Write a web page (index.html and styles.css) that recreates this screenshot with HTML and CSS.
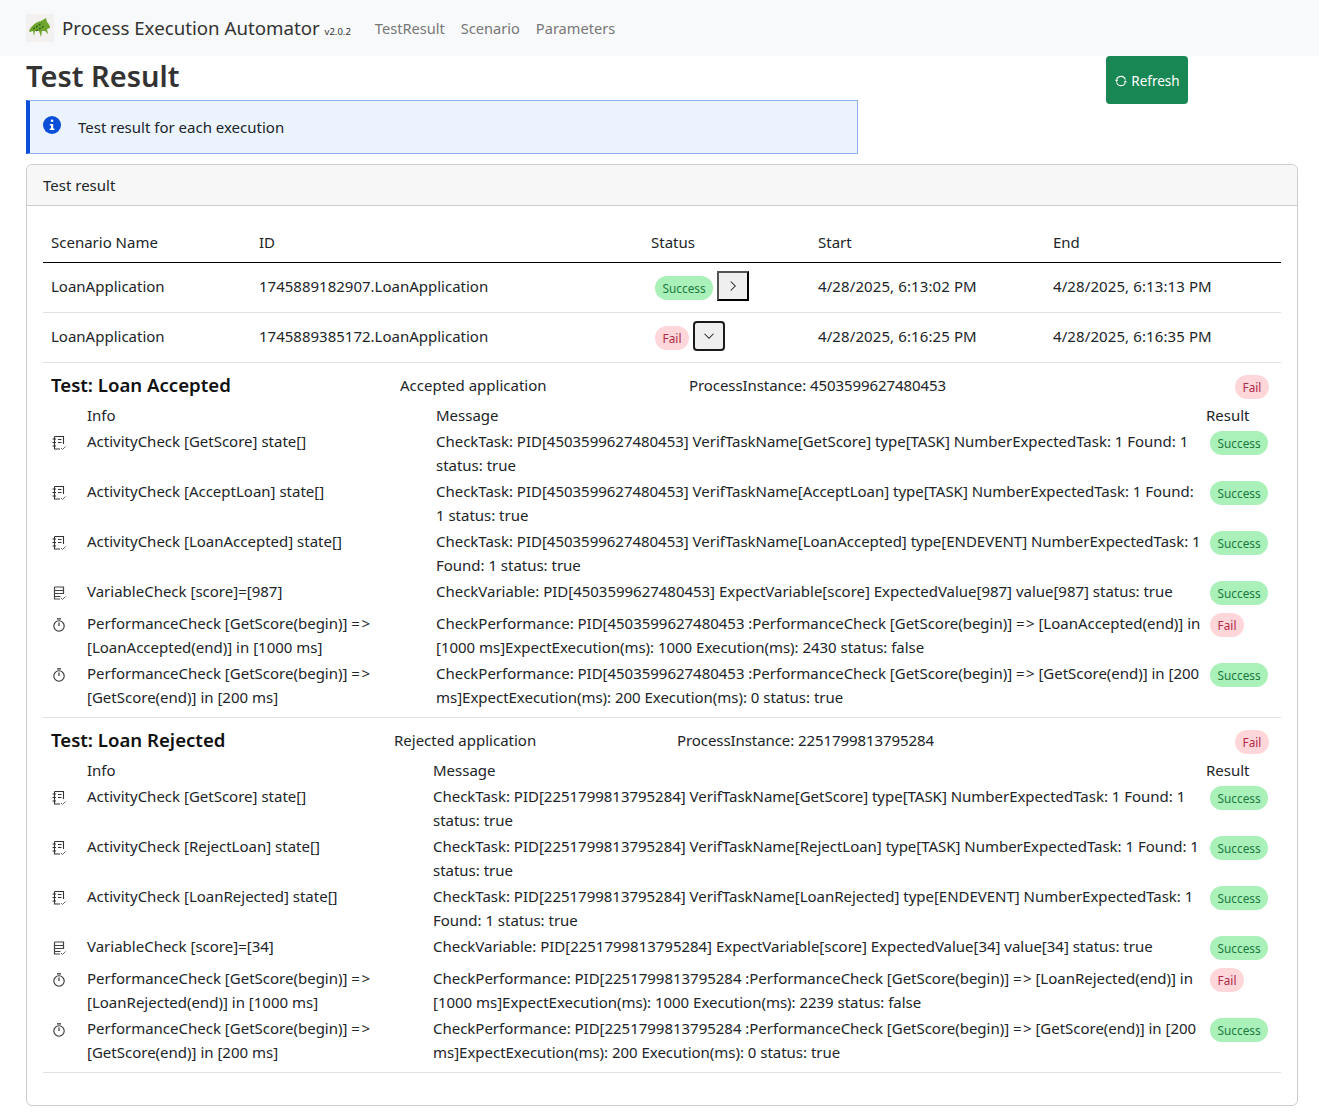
FILE: index.html
```html
<!DOCTYPE html>
<html>
  <head>
    <meta charset="UTF-8" />
    <title>Process Execution Automator</title>
    <link rel="stylesheet" href="styles.css">
  </head>
  <body>
    <svg class="icon-defs" width="0" height="0">
      <symbol id="icon-task" viewBox="0 0 16 16">
        <path d="M3.5 1.5h9v7.5M9 14H3.5V1.5" fill="none" stroke="#333" stroke-width="1.1"/>
        <path d="M1.5 4h3.5M1.5 7.5h3.5M1.5 11h3.5M7 4.5h3.5M7 7.5h3.5" fill="none" stroke="#333" stroke-width="1"/>
        <path d="M10 13l1.5 1.5 3-3" fill="none" stroke="#666" stroke-width="1"/>
      </symbol>
      <symbol id="icon-variable" viewBox="0 0 16 16">
        <path d="M3.5 2h9v7M9 14H3.5V2M3.5 5.5h9M3.5 8.5h9M3.5 11.5h6" fill="none" stroke="#444" stroke-width="1.2"/>
        <path d="M10 13l1.5 1.5 3-3" fill="none" stroke="#666" stroke-width="1"/>
      </symbol>
      <symbol id="icon-timer" viewBox="0 0 16 16">
        <circle cx="8" cy="9" r="5.2" fill="none" stroke="#333" stroke-width="1.1"/>
        <path d="M6 1.8h4M8 5.5V9" fill="none" stroke="#333" stroke-width="1.2"/>
      </symbol>
    </svg>

    <nav class="navbar">
      <svg class="logo" width="28" height="28" viewBox="0 0 28 28">
        <rect width="28" height="28" fill="#f2f1ef"/>
        <path d="M3 17c2-5 7-9 12-10l5-3 1 4c2 2 3 4 3 6l-3 1 1 5-3-3-3 0-1 6-2-6-4 0-1 5-1-5-3 1z" fill="#6fa52f"/>
        <path d="M7 15l9-6M10 17l8-5" stroke="#31611a" stroke-width="1.4" stroke-dasharray="2 1.5"/>
      </svg>
      <a class="brand" href="#">Process Execution Automator <small>v2.0.2</small></a>
      <a class="nav-link" href="#">TestResult</a>
      <a class="nav-link" href="#">Scenario</a>
      <a class="nav-link" href="#">Parameters</a>
    </nav>

    <main class="page">
      <div class="page-top">
        <div class="page-intro">
          <h1>Test Result</h1>
          <div class="alert">
            <svg class="alert-icon" width="18" height="18" viewBox="0 0 18 18">
              <circle cx="9" cy="9" r="9" fill="#0b4fd8"/>
              <rect x="7.8" y="3.5" width="2.6" height="2.6" rx="1.3" fill="#fff"/>
              <path d="M6.8 8h3.4v4.6h1.2v1.4H6.8v-1.4H8V9.4H6.8z" fill="#fff"/>
            </svg>
            <span>Test result for each execution</span>
          </div>
        </div>
        <button class="refresh" type="button">
          <svg width="14" height="14" viewBox="0 0 16 16">
            <path d="M3 6.5A5.2 5.2 0 0 1 13 6.5M13 9.5A5.2 5.2 0 0 1 3 9.5" fill="none" stroke="#fff" stroke-width="1.2"/>
            <path d="M1 6.5h4L3 9zM15 9.5h-4L13 7z" fill="#fff"/>
          </svg>
          Refresh
        </button>
      </div>

      <section class="card">
        <div class="card-header">Test result</div>
        <div class="card-body">
          <div class="exec-row exec-head">
            <div>Scenario Name</div>
            <div>ID</div>
            <div>Status</div>
            <div>Start</div>
            <div>End</div>
          </div>
          <div class="exec-row">
            <div>LoanApplication</div>
            <div>1745889182907.LoanApplication</div>
            <div class="status-cell">
              <span class="badge success">Success</span>
              <button class="toggle" type="button">
                <svg width="12" height="12" viewBox="0 0 16 16"><path d="M5 2l6 6-6 6" fill="none" stroke="#222" stroke-width="1.4"/></svg>
              </button>
            </div>
            <div class="date">4/28/2025, 6:13:02 PM</div>
            <div class="date">4/28/2025, 6:13:13 PM</div>
          </div>
          <div class="exec-row">
            <div>LoanApplication</div>
            <div>1745889385172.LoanApplication</div>
            <div class="status-cell">
              <span class="badge fail">Fail</span>
              <button class="toggle open" type="button">
                <svg width="12" height="12" viewBox="0 0 16 16"><path d="M2 5l6 6 6-6" fill="none" stroke="#222" stroke-width="1.4"/></svg>
              </button>
            </div>
            <div class="date">4/28/2025, 6:16:25 PM</div>
            <div class="date">4/28/2025, 6:16:35 PM</div>
          </div>

          <div class="test test-accepted">
            <div class="test-title">
              <h2>Test: Loan Accepted</h2>
              <div>Accepted application</div>
              <div class="instance">ProcessInstance: 4503599627480453</div>
              <span class="badge fail">Fail</span>
            </div>
            <div class="check check-head"><div></div><div>Info</div><div>Message</div><div>Result</div></div>
            <div class="check">
              <svg class="check-icon" width="16" height="16"><use href="#icon-task"/></svg>
              <div>ActivityCheck [GetScore] state[]</div>
              <div class="message">CheckTask: PID[4503599627480453] VerifTaskName[GetScore] type[TASK] NumberExpectedTask: 1 Found: 1 status: true</div>
              <div><span class="badge success">Success</span></div>
            </div>
            <div class="check">
              <svg class="check-icon" width="16" height="16"><use href="#icon-task"/></svg>
              <div>ActivityCheck [AcceptLoan] state[]</div>
              <div class="message">CheckTask: PID[4503599627480453] VerifTaskName[AcceptLoan] type[TASK] NumberExpectedTask: 1 Found: 1 status: true</div>
              <div><span class="badge success">Success</span></div>
            </div>
            <div class="check">
              <svg class="check-icon" width="16" height="16"><use href="#icon-task"/></svg>
              <div>ActivityCheck [LoanAccepted] state[]</div>
              <div class="message">CheckTask: PID[4503599627480453] VerifTaskName[LoanAccepted] type[ENDEVENT] NumberExpectedTask: 1 Found: 1 status: true</div>
              <div><span class="badge success">Success</span></div>
            </div>
            <div class="check check-single">
              <svg class="check-icon" width="16" height="16"><use href="#icon-variable"/></svg>
              <div>VariableCheck [score]=[987]</div>
              <div class="message">CheckVariable: PID[4503599627480453] ExpectVariable[score] ExpectedValue[987] value[987] status: true</div>
              <div><span class="badge success">Success</span></div>
            </div>
            <div class="check">
              <svg class="check-icon" width="16" height="16"><use href="#icon-timer"/></svg>
              <div>PerformanceCheck [GetScore(begin)] =&hairsp;&gt; [LoanAccepted(end)] in [1000 ms]</div>
              <div class="message">CheckPerformance: PID[4503599627480453 :PerformanceCheck [GetScore(begin)] =&hairsp;&gt; [LoanAccepted(end)] in [1000 ms]ExpectExecution(ms): 1000 Execution(ms): 2430 status: false</div>
              <div><span class="badge fail">Fail</span></div>
            </div>
            <div class="check">
              <svg class="check-icon" width="16" height="16"><use href="#icon-timer"/></svg>
              <div>PerformanceCheck [GetScore(begin)] =&hairsp;&gt; [GetScore(end)] in [200 ms]</div>
              <div class="message">CheckPerformance: PID[4503599627480453 :PerformanceCheck [GetScore(begin)] =&hairsp;&gt; [GetScore(end)] in [200 ms]ExpectExecution(ms): 200 Execution(ms): 0 status: true</div>
              <div><span class="badge success">Success</span></div>
            </div>
          </div>

          <div class="test test-rejected">
            <div class="test-title">
              <h2>Test: Loan Rejected</h2>
              <div>Rejected application</div>
              <div class="instance">ProcessInstance: 2251799813795284</div>
              <span class="badge fail">Fail</span>
            </div>
            <div class="check check-head"><div></div><div>Info</div><div>Message</div><div>Result</div></div>
            <div class="check">
              <svg class="check-icon" width="16" height="16"><use href="#icon-task"/></svg>
              <div>ActivityCheck [GetScore] state[]</div>
              <div class="message">CheckTask: PID[2251799813795284] VerifTaskName[GetScore] type[TASK] NumberExpectedTask: 1 Found: 1 status: true</div>
              <div><span class="badge success">Success</span></div>
            </div>
            <div class="check">
              <svg class="check-icon" width="16" height="16"><use href="#icon-task"/></svg>
              <div>ActivityCheck [RejectLoan] state[]</div>
              <div class="message">CheckTask: PID[2251799813795284] VerifTaskName[RejectLoan] type[TASK] NumberExpectedTask: 1 Found: 1 status: true</div>
              <div><span class="badge success">Success</span></div>
            </div>
            <div class="check">
              <svg class="check-icon" width="16" height="16"><use href="#icon-task"/></svg>
              <div>ActivityCheck [LoanRejected] state[]</div>
              <div class="message">CheckTask: PID[2251799813795284] VerifTaskName[LoanRejected] type[ENDEVENT] NumberExpectedTask: 1 Found: 1 status: true</div>
              <div><span class="badge success">Success</span></div>
            </div>
            <div class="check check-single">
              <svg class="check-icon" width="16" height="16"><use href="#icon-variable"/></svg>
              <div>VariableCheck [score]=[34]</div>
              <div class="message">CheckVariable: PID[2251799813795284] ExpectVariable[score] ExpectedValue[34] value[34] status: true</div>
              <div><span class="badge success">Success</span></div>
            </div>
            <div class="check">
              <svg class="check-icon" width="16" height="16"><use href="#icon-timer"/></svg>
              <div>PerformanceCheck [GetScore(begin)] =&hairsp;&gt; [LoanRejected(end)] in [1000 ms]</div>
              <div class="message">CheckPerformance: PID[2251799813795284 :PerformanceCheck [GetScore(begin)] =&hairsp;&gt; [LoanRejected(end)] in [1000 ms]ExpectExecution(ms): 1000 Execution(ms): 2239 status: false</div>
              <div><span class="badge fail">Fail</span></div>
            </div>
            <div class="check">
              <svg class="check-icon" width="16" height="16"><use href="#icon-timer"/></svg>
              <div>PerformanceCheck [GetScore(begin)] =&hairsp;&gt; [GetScore(end)] in [200 ms]</div>
              <div class="message">CheckPerformance: PID[2251799813795284 :PerformanceCheck [GetScore(begin)] =&hairsp;&gt; [GetScore(end)] in [200 ms]ExpectExecution(ms): 200 Execution(ms): 0 status: true</div>
              <div><span class="badge success">Success</span></div>
            </div>
          </div>
        </div>
      </section>
    </main>
  </body>
</html>
```

FILE: styles.css
```css
body {
  margin: 0;
  font-family: "Noto Sans", sans-serif;
  font-size: 15px;
  line-height: 24px;
  color: #212529;
  background-color: #fff;
}
a {
  text-decoration: none;
}
.icon-defs {
  display: block;
}

/* Navbar */
.navbar {
  display: flex;
  align-items: center;
  height: 56px;
  padding-left: 26px;
  background-color: #f8f9fa;
}
.logo {
  margin-right: 8px;
}
.brand {
  margin: 3px 24px 0 0;
  font-size: 18.7px;
  color: #333;
}
.brand small {
  font-size: 9.5px;
}
.nav-link {
  margin-right: 16px;
  font-size: 14.6px;
  color: #777;
}

/* Title and alert */
.page {
  padding: 0 21px 8px 26px;
}
.page-top {
  display: flex;
  align-items: flex-start;
  margin-bottom: 10px;
}
.page-intro {
  width: 832px;
  margin-right: 248px;
}
h1 {
  margin: 0;
  height: 44px;
  font-size: 29px;
  line-height: 40px;
  font-weight: 600;
  color: #333;
}
.alert {
  display: flex;
  align-items: center;
  height: 52px;
  padding-left: 13px;
  border: 1px solid #8fb0ee;
  border-left: 4px solid #0b4fd8;
  background-color: #ebf3ff;
}
.alert-icon {
  margin: 0 17px 4px 0;
}
.refresh {
  display: flex;
  align-items: center;
  justify-content: center;
  gap: 3px;
  width: 82px;
  height: 48px;
  padding: 2px 0 0;
  border: none;
  border-radius: 4px;
  background-color: #198754;
  color: #fff;
  font-family: inherit;
  font-size: 13.5px;
}

/* Card */
.card {
  border: 1px solid #ccc;
  border-radius: 6px;
}
.card-header {
  height: 40px;
  padding-left: 16px;
  line-height: 41px;
  border-bottom: 1px solid #ccc;
  border-radius: 6px 6px 0 0;
  background-color: #f7f7f7;
}
.card-body {
  padding: 16px 16px 32px;
}

/* Executions table */
.exec-row {
  display: grid;
  grid-template-columns: 208px 392px 167px 235px 1fr;
  align-items: center;
  height: 45px;
  padding: 0 0 4px 8px;
  border-bottom: 1px solid #dee2e6;
}
.exec-head {
  height: 40px;
  padding-bottom: 0;
  border-bottom: 1px solid #000;
}
.date {
  letter-spacing: 0.1px;
}
.status-cell {
  display: flex;
  align-items: center;
  gap: 4px;
}
.status-cell .badge {
  margin-top: 4px;
}
.badge {
  display: inline-block;
  height: 24px;
  padding: 0 7.6px;
  margin: 2px 0 0 4px;
  border-radius: 12px;
  font-size: 11.8px;
  line-height: 25px;
}
.success {
  background-color: #a9f0b9;
  color: #1c7a3e;
}
.fail {
  background-color: #ffd6d9;
  color: #b02a47;
}
.toggle {
  display: flex;
  align-items: center;
  justify-content: center;
  width: 32px;
  height: 30px;
  padding: 0;
  border: 2px outset #000;
  background-color: #efefef;
}
.toggle.open {
  border: 2px solid #1a1a1a;
  border-radius: 4px;
}

/* Test blocks */
.test {
  padding: 7px 8px 6px;
  border-bottom: 1px solid #dee2e6;
}
.test-title {
  display: grid;
  align-items: start;
  height: 33px;
  line-height: 30px;
}
.test-accepted .test-title {
  grid-template-columns: 349px 289px 1fr auto;
}
.test-rejected .test-title {
  grid-template-columns: 343px 283px 1fr auto;
}
.test-title .badge {
  margin: 5px 4px 0 0;
}
.instance {
  letter-spacing: -0.08px;
}
h2 {
  margin: 0;
  font-size: 18.6px;
  line-height: 30px;
  font-weight: 600;
  color: #111;
}
.check {
  display: grid;
  height: 50px;
}
.test-accepted .check {
  grid-template-columns: 36px 349px 770px 67px;
}
.test-rejected .check {
  grid-template-columns: 36px 346px 773px 67px;
}
.check-head {
  height: 26px;
}
.check-single {
  height: 32px;
}
.check-icon {
  margin-top: 6px;
}
.message {
  letter-spacing: -0.02px;
}
```
